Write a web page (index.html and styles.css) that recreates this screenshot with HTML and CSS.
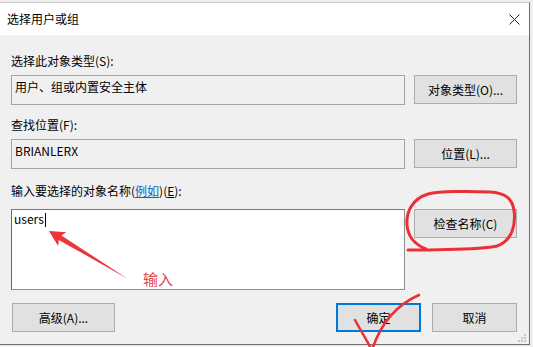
FILE: index.html
```html
<!DOCTYPE html>
<html lang="zh-CN">
<head>
<meta charset="utf-8">
<title>选择用户或组</title>
<link rel="stylesheet" href="styles.css">
</head>
<body>
<div class="screen">
  <div class="window">
    <div class="titlebar">
      <span class="title">选择用户或组</span>
      <svg class="close" width="11" height="11" viewBox="0 0 11 11"><path d="M0.5 0.5 L10.5 10.5 M10.5 0.5 L0.5 10.5" stroke="#222" stroke-width="1" fill="none"/></svg>
    </div>
    <div class="content">
      <div class="label">选择此对象类型(S):</div>
      <div class="row">
        <div class="field">用户、组或内置安全主体</div>
        <button class="btn side">对象类型(O)...</button>
      </div>
      <div class="label l2">查找位置(F):</div>
      <div class="row">
        <div class="field">BRIANLERX</div>
        <button class="btn side">位置(L)...</button>
      </div>
      <div class="label l3">输入要选择的对象名称(<a class="link">例如</a>)(<u>E</u>):</div>
      <div class="row">
        <div class="textarea">users<span class="caret"></span></div>
        <button class="btn side">检查名称(C)</button>
      </div>
      <div class="footer">
        <button class="btn wide">高级(A)...</button>
        <div class="actions">
          <button class="btn small primary">确定</button>
          <button class="btn small">取消</button>
        </div>
      </div>
    </div>
    <svg class="grip" width="8" height="8" viewBox="0 0 8 8">
      <rect x="6" y="0" width="2" height="2" fill="#c4c4c4"/>
      <rect x="3" y="3" width="2" height="2" fill="#c4c4c4"/>
      <rect x="6" y="3" width="2" height="2" fill="#c4c4c4"/>
      <rect x="0" y="6" width="2" height="2" fill="#c4c4c4"/>
      <rect x="3" y="6" width="2" height="2" fill="#c4c4c4"/>
      <rect x="6" y="6" width="2" height="2" fill="#c4c4c4"/>
    </svg>
  </div>
  <svg class="marks" width="533" height="347" viewBox="0 0 533 347">
    <polygon points="49,231 66.4,232.2 61.4,235.6 128,279 58.8,239.9 58.1,245.9" fill="#ee3535"/>
    <path d="M408,250 L425,250 C450,249 480,250 497,246 C512,241 516,225 514,210 C512,198 505,193 490,192 C470,191 440,191 428,194 C412,199 406,212 407,225 C408,238 416,245 426,249" fill="none" stroke="#ea3036" stroke-width="3" stroke-linecap="round" stroke-linejoin="round"/>
    <path d="M355,320 L372,350 Q385,310 419,295" fill="none" stroke="#ea3036" stroke-width="2.5" stroke-linecap="round" stroke-linejoin="round"/>
  </svg>
  <span class="note">输入</span>
</div>
</body>
</html>
```

FILE: styles.css
```css
* { box-sizing: border-box; }
html, body {
  margin: 0;
  padding: 0;
  background: #eeeeee;
}
body {
  font-family: "Noto Sans CJK SC", "Noto Sans", sans-serif;
  font-size: 12px;
  color: #000;
}
.screen {
  position: relative;
  width: 533px;
  height: 347px;
  overflow: hidden;
  padding-top: 2px;
}
.window {
  position: relative;
  width: 530px;
  height: 343px;
  background: #f0f0f0;
  border-top: 1px solid #cfcfcf;
  border-right: 1px solid #6e6e6e;
  border-bottom: 1px solid #6e6e6e;
  display: flex;
  flex-direction: column;
}
.titlebar {
  height: 32px;
  flex: none;
  background: #fff;
  display: flex;
  align-items: center;
  justify-content: space-between;
  padding: 0 9px 0 7px;
}
.title {
  font-size: 12px;
  line-height: 16px;
}
.close { display: block; }
.content {
  padding: 18px 12px 0 11px;
  display: flex;
  flex-direction: column;
}
.label {
  line-height: 16px;
  height: 16px;
  margin-bottom: 6px;
  white-space: nowrap;
}
.l2 { margin-top: 12px; }
.l3 { margin-top: 14px; margin-bottom: 10px; }
.link {
  color: #0066cc;
  text-decoration: underline;
}
.row {
  display: flex;
  gap: 9px;
  align-items: flex-start;
}
.field {
  width: 394px;
  height: 30px;
  border: 1px solid #a3a3a3;
  background: #f0f0f0;
  padding: 3px 3px;
  line-height: 16px;
}
.textarea {
  width: 394px;
  height: 81px;
  border: 1px solid #8c8c8c;
  border-left-color: #6a6a6a;
  border-top-color: #7a7a7a;
  background: #fff;
  padding: 1px 2px;
  line-height: 16px;
}
.caret {
  display: inline-block;
  width: 1px;
  height: 14px;
  background: #000;
  vertical-align: -3px;
  margin-left: 1px;
}
.btn {
  font-family: inherit;
  font-size: 12px;
  color: #000;
  background: #e1e1e1;
  border: 1px solid #adadad;
  border-radius: 0;
  padding: 0;
  height: 29px;
  line-height: 16px;
}
.side { width: 103px; }
.wide { width: 103px; margin-left: 1px; }
.small { width: 85px; }
.primary { border: 2px solid #0078d7; }
.footer {
  margin-top: 13px;
  display: flex;
  justify-content: space-between;
}
.actions {
  display: flex;
  gap: 11px;
}
.grip {
  position: absolute;
  right: 3px;
  bottom: 2px;
}
.marks {
  position: absolute;
  left: 0;
  top: 0;
  pointer-events: none;
}
.note {
  position: absolute;
  left: 143px;
  top: 270px;
  font-size: 15px;
  line-height: 18px;
  color: #e0474c;
}
```
